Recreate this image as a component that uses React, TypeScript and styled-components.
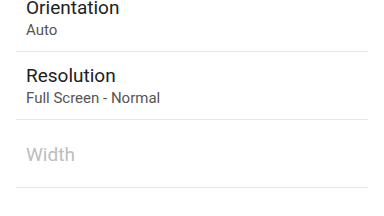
import React from "react";
import styled, { createGlobalStyle } from "styled-components";

const Global = createGlobalStyle`
  html, body { margin: 0; padding: 0; background: #ffffff; }
  body { font-family: Roboto, "Noto Sans", sans-serif; overflow: hidden; }
`;

const Page = styled.div`
  width: 384px;
  height: 216px;
  overflow: hidden;
  background: #ffffff;
`;

const List = styled.div`
  margin: -16px 16px 0 16px;
  display: flex;
  flex-direction: column;
`;

const Item = styled.div`
  box-sizing: border-box;
  height: 68px;
  border-bottom: 1px solid #e8e8e8;
  padding: 3px 0 0 10px;
  display: flex;
  flex-direction: column;
  justify-content: center;
`;

const Title = styled.div<{ $disabled?: boolean }>`
  font-size: 19px;
  line-height: 22px;
  color: ${(p) => (p.$disabled ? "#bdbdbd" : "#212121")};
`;

const Summary = styled.div`
  font-size: 15px;
  line-height: 22px;
  color: #555555;
`;

const items: { title: string; summary?: string; disabled?: boolean }[] = [
  { title: "Orientation", summary: "Auto" },
  { title: "Resolution", summary: "Full Screen - Normal" },
  { title: "Width", disabled: true },
];

export default function App() {
  return (
    <Page>
      <Global />
      <List>
        {items.map((it) => (
          <Item key={it.title}>
            <Title $disabled={it.disabled}>{it.title}</Title>
            {it.summary && <Summary>{it.summary}</Summary>}
          </Item>
        ))}
      </List>
    </Page>
  );
}
